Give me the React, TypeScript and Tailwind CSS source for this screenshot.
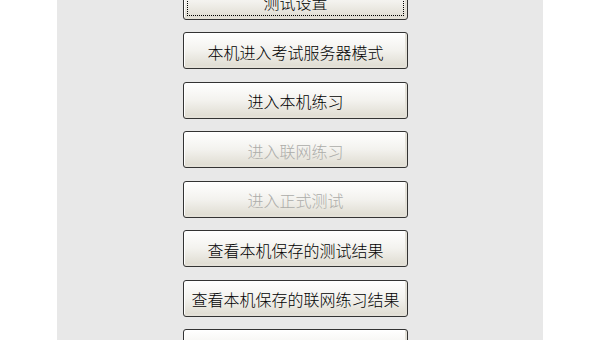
const buttons: { label: string; disabled?: boolean; focused?: boolean }[] = [
  { label: "测试设置", focused: true },
  { label: "本机进入考试服务器模式" },
  { label: "进入本机练习" },
  { label: "进入联网练习", disabled: true },
  { label: "进入正式测试", disabled: true },
  { label: "查看本机保存的测试结果" },
  { label: "查看本机保存的联网练习结果" },
  { label: "清除本机保存的测试结果" },
];

function XpButton({ label, disabled, focused }: { label: string; disabled?: boolean; focused?: boolean }) {
  return (
    <button
      disabled={disabled}
      className={
        "relative h-[37px] w-[225px] shrink-0 rounded-[3px] border border-[#333333] bg-gradient-to-b from-[#ffffff] via-[#f3f2ee] to-[#dedbd0] pt-[2px] text-[16px] font-light leading-none shadow-[inset_-2px_-2px_0_#e4e1d8,inset_1px_1px_0_#ffffff] " +
        (disabled ? "text-[#acaca9]" : "text-black")
      }
    >
      {focused && (
        <span className="pointer-events-none absolute inset-[3px] border border-dotted border-black" />
      )}
      {label}
    </button>
  );
}

export default function App() {
  return (
    <div
      className="flex h-[340px] w-[600px] justify-center overflow-hidden bg-white"
      style={{ fontFamily: '"SimSun", "Noto Sans CJK SC", sans-serif' }}
    >
      <div className="flex w-[486px] flex-col items-start bg-[#e8e8e8] pl-[126px]">
        <div className="mt-[-17.5px] flex flex-col items-center gap-[12.5px]">
          {buttons.map((b) => (
            <XpButton key={b.label} {...b} />
          ))}
        </div>
      </div>
    </div>
  );
}
